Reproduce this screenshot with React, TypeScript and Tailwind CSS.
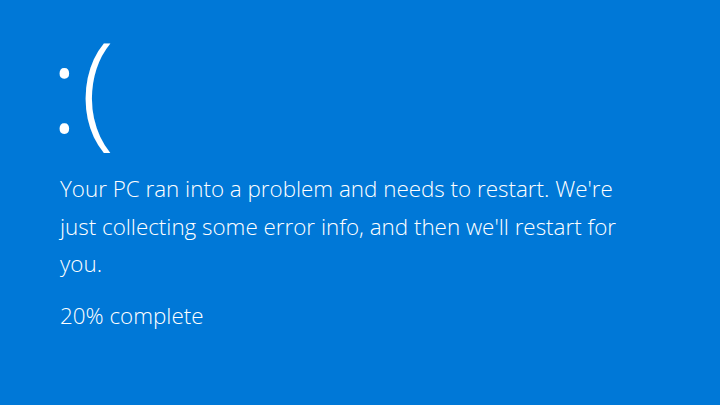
export default function App() {
  return (
    <div
      className="flex h-[405px] w-[720px] flex-col bg-[#0078d7] pl-[60px] pt-[23px] text-white"
      style={{ fontFamily: '"Segoe UI", "Open Sans", "Noto Sans", sans-serif' }}
    >
      <div className="-ml-[10px] flex h-[128px] items-start font-light">
        <span className="mr-[2px] text-[120px] leading-[128px]">:</span>
        <span className="-mt-[2px] text-[125px] leading-[128px]">(</span>
      </div>
      <p className="mt-[19px] w-[585px] text-[22.4px] font-light leading-[37.5px]">
        Your PC ran into a problem and needs to restart. We're just collecting some error info,
        and then we'll restart for you.
      </p>
      <p className="mt-[14px] text-[22.4px] font-light leading-[37px]">20% complete</p>
    </div>
  );
}
